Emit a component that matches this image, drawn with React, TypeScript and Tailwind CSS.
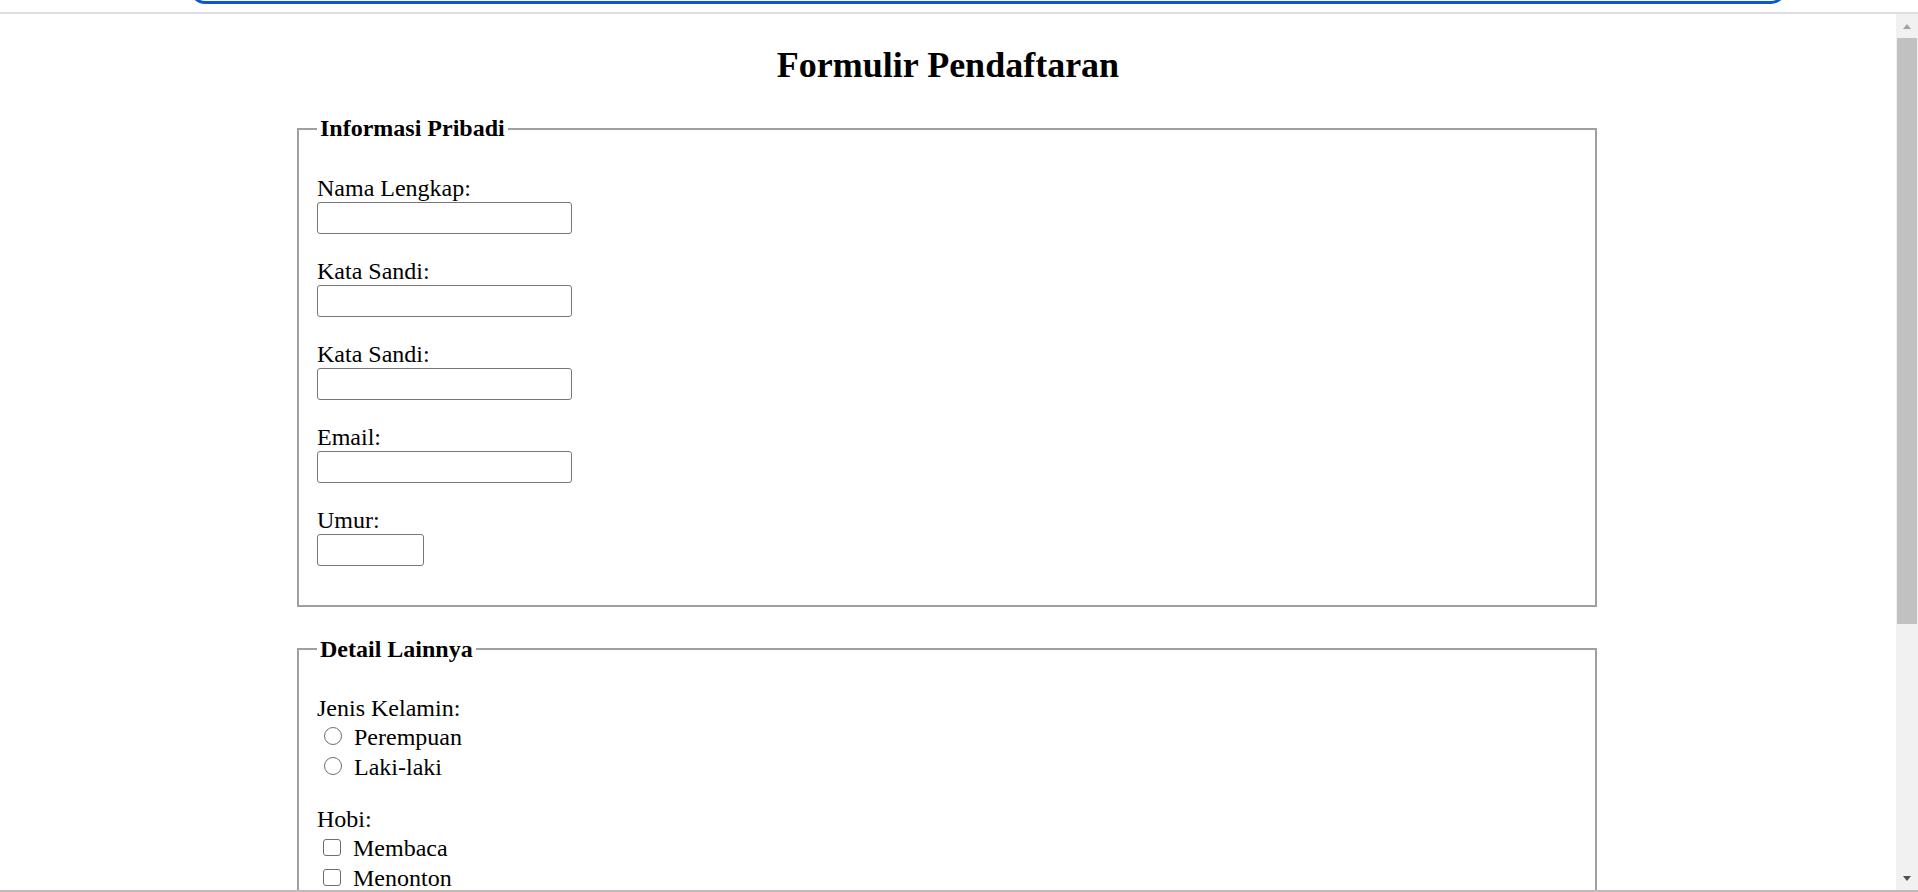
import React from "react";

const fields = [
  { id: "nama", label: "Nama Lengkap:", type: "text", width: "w-[255px]" },
  { id: "sandi", label: "Kata Sandi:", type: "password", width: "w-[255px]" },
  { id: "sandi2", label: "Kata Sandi:", type: "password", width: "w-[255px]" },
  { id: "email", label: "Email:", type: "email", width: "w-[255px]" },
  { id: "umur", label: "Umur:", type: "number", width: "w-[107px]" },
];

const TopStrip = () => (
  <div>
    <div className="h-[12px] overflow-hidden">
      <div className="-mt-[26px] ml-[190px] h-[30px] w-[1596px] rounded-[16px] border-[3px] border-[#0b57d0]" />
    </div>
    <div className="h-[2px] bg-[#dedede]" />
  </div>
);

const Scrollbar = () => (
  <div className="flex h-full w-[22px] flex-col items-center bg-[#f1f1f1]">
    <div className="flex h-[24px] w-full items-center justify-center">
      <div className="h-0 w-0 border-x-[4px] border-b-[5px] border-x-transparent border-b-[#a3a3a3]" />
    </div>
    <div className="h-[586px] w-[20px] bg-[#c1c1c1]" />
    <div className="flex-1" />
    <div className="flex h-[24px] w-full items-center justify-center">
      <div className="h-0 w-0 border-x-[4px] border-t-[5px] border-x-transparent border-t-[#505050]" />
    </div>
  </div>
);

const Choice = ({ type, label }: { type: "radio" | "checkbox"; label: string }) => (
  <div className="flex h-[30px]">
    <input
      type={type}
      name={type === "radio" ? "kelamin" : label}
      className={
        type === "radio"
          ? "ml-[7px] mt-[5px] h-[18px] w-[18px] appearance-none rounded-full border-[1.5px] border-[#6f6f6f] bg-white"
          : "ml-[6px] mt-[6px] h-[17px] w-[18px] appearance-none rounded-[3px] border-[1.5px] border-[#6f6f6f] bg-white"
      }
    />
    <span className="ml-[12px] leading-[30px]">{label}</span>
  </div>
);

export default function App() {
  return (
    <div className="relative flex h-[892px] w-[1918px] flex-col overflow-hidden bg-white text-black [font-family:'Liberation_Serif',serif]">
      <TopStrip />
      <div className="flex h-[876px]">
        <div className="w-[1896px] overflow-hidden">
          <h1 className="mt-[31px] text-center text-[36px] font-bold leading-[41px]">Formulir Pendaftaran</h1>

          <form>
            <fieldset className="ml-[297px] mt-[29px] w-[1300px] border-2 border-[#a0a0a0] px-[18px] pb-[15px] pt-[32px]">
              <legend className="px-[3px] text-[24px] font-bold leading-[27.6px]">Informasi Pribadi</legend>
              {fields.map((f) => (
                <div key={f.id} className="mb-[24px]">
                  <label htmlFor={f.id} className="block text-[24px] leading-[27px]">
                    {f.label}
                  </label>
                  <input
                    id={f.id}
                    type={f.type}
                    className={`${f.width} block h-[32px] rounded-[3px] border border-[#767676] bg-white px-[3px] text-[20px]`}
                  />
                </div>
              ))}
            </fieldset>

            <fieldset className="ml-[297px] mt-[29px] w-[1300px] border-2 border-[#a0a0a0] px-[18px] pb-[15px] pt-[32px] text-[24px]">
              <legend className="px-[3px] font-bold leading-[27.6px]">Detail Lainnya</legend>
              <div className="leading-[27px]">Jenis Kelamin:</div>
              <Choice type="radio" label="Perempuan" />
              <Choice type="radio" label="Laki-laki" />
              <div className="mt-[23px] leading-[28px]">Hobi:</div>
              <Choice type="checkbox" label="Membaca" />
              <Choice type="checkbox" label="Menonton" />
            </fieldset>
          </form>
        </div>
        <Scrollbar />
      </div>
      <div className="h-[2px] bg-[#c3bbb3]" />
    </div>
  );
}
